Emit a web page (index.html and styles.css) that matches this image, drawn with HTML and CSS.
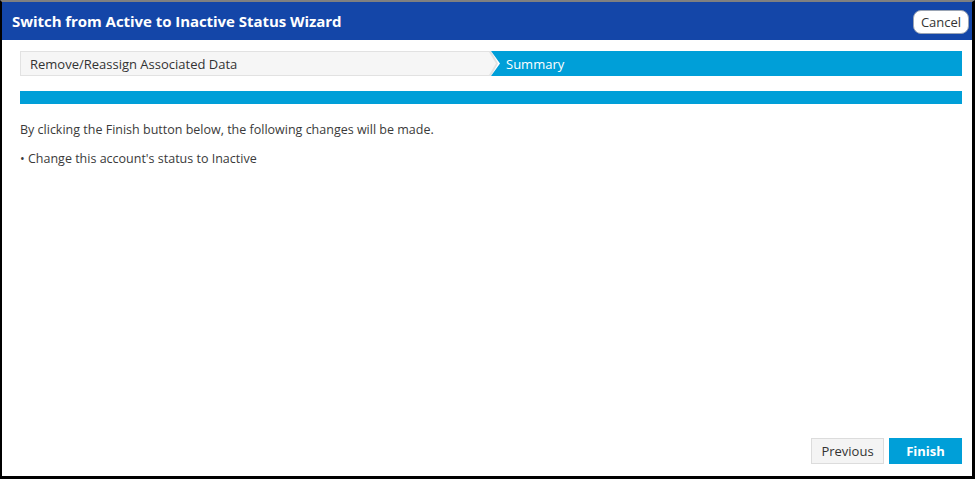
FILE: index.html
```html
<!DOCTYPE html>
<html lang="en">
<head>
<meta charset="utf-8">
<title>Switch from Active to Inactive Status Wizard</title>
<link rel="stylesheet" href="styles.css">
</head>
<body>
<div class="frame">
  <div class="dialog">
    <header class="dialog-header">
      <h1 class="dialog-title">Switch from Active to Inactive Status Wizard</h1>
      <button class="btn-cancel" type="button">Cancel</button>
    </header>
    <main class="dialog-body">
      <ol class="steps">
        <li class="step step-done">Remove/Reassign Associated Data</li>
        <li class="step step-current">Summary</li>
      </ol>
      <div class="progress"><div class="progress-fill"></div></div>
      <p class="intro">By clicking the Finish button below, the following changes will be made.</p>
      <p class="change">• Change this account's status to Inactive</p>
    </main>
    <footer class="dialog-footer">
      <button class="btn btn-secondary" type="button">Previous</button>
      <button class="btn btn-primary" type="button">Finish</button>
    </footer>
  </div>
</div>
</body>
</html>
```
FILE: styles.css
```css
* { box-sizing: border-box; }

html, body {
  margin: 0;
  padding: 0;
  background: #000;
}

body {
  font-family: "Open Sans", "Noto Sans", sans-serif;
  color: #333;
}

.frame {
  width: 975px;
  height: 479px;
  border-top: 2px solid #808080;
  border-left: 2px solid #000;
  border-right: 3px solid #000;
  border-bottom: 3px solid #000;
}

.dialog {
  height: 100%;
  background: #fff;
  display: flex;
  flex-direction: column;
}

.dialog-header {
  height: 38px;
  background: #1446a8;
  display: flex;
  align-items: center;
  justify-content: space-between;
  padding: 0 3px 0 10px;
}

.dialog-title {
  margin: 0;
  color: #fff;
  font-size: 15px;
  font-weight: 700;
  letter-spacing: -0.05px;
}

.btn-cancel {
  height: 24px;
  width: 56px;
  margin-top: 1px;
  border: 1px solid #9aa4b4;
  border-radius: 8px;
  background: #fff;
  color: #333;
  font-family: inherit;
  font-size: 13px;
  padding: 0;
}

.dialog-body {
  flex: 1;
  padding: 11px 10px 0 18px;
}

/* wizard breadcrumb: finished step is a grey chevron, current step is notched */
.steps {
  list-style: none;
  margin: 0;
  padding: 0;
  display: flex;
  height: 25px;
}

.step {
  display: flex;
  align-items: center;
  font-size: 13px;
}

.step-done {
  flex: 0 0 478px;
  margin-right: -7px;
  padding-left: 10px;
  background: #e2e2e2;
  color: #333;
  clip-path: polygon(0 0, 471px 0, 478px 50%, 471px 100%, 0 100%);
  position: relative;
  isolation: isolate;
}

.step-done::before {
  content: "";
  position: absolute;
  inset: 1px;
  z-index: -1;
  background: #f6f6f6;
  clip-path: polygon(0 0, 468px 0, 475px 50%, 468px 100%, 0 100%);
}

.step-current {
  flex: 1;
  padding-left: 15px;
  background: #009fd8;
  color: #fff;
  clip-path: polygon(0 0, 100% 0, 100% 100%, 0 100%, 9px 50%);
  margin-left: 0;
}

.progress {
  margin-top: 15px;
  height: 13px;
  background: #e6e6e6;
}

.progress-fill {
  width: 100%;
  height: 100%;
  background: #009fd8;
}

.intro,
.change {
  margin: 0;
  font-size: 12.5px;
  line-height: 18px;
  color: #3a3a3a;
}

.intro {
  margin-top: 17px;
}

.change {
  margin-top: 11px;
}

.dialog-footer {
  display: flex;
  justify-content: flex-end;
  gap: 5px;
  padding: 0 10px 12px 0;
}

.btn {
  height: 26px;
  width: 73px;
  font-family: inherit;
  font-size: 13px;
  padding: 0;
}

.btn-secondary {
  background: #f4f4f4;
  border: 1px solid #dcdcdc;
  color: #333;
}

.btn-primary {
  background: #009fd8;
  border: 1px solid #009fd8;
  color: #fff;
  font-weight: 700;
}
```
